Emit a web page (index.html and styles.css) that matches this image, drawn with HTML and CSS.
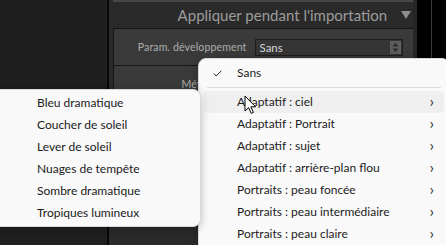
FILE: index.html
```html
<!DOCTYPE html>
<html lang="fr">
<head>
    <meta charset="UTF-8">
    <meta name="viewport" content="width=device-width, initial-scale=1.0">
    <title>Appliquer pendant l'importation</title>
    <link rel="stylesheet" href="styles.css">
</head>
<body>
    <div class="app">
        <div class="side"></div>
        <div class="split"></div>
        <div class="panel">
            <div class="panel-inner">
                <div class="panel-head">
                    <span class="panel-title">Appliquer pendant l'importation</span>
                    <span class="tri"></span>
                </div>
                <div class="box">
                    <div class="row">
                        <span class="label">Param. développement</span>
                        <div class="select">
                            <span>Sans</span>
                            <span class="stepper">
                                <svg width="7" height="11" viewBox="0 0 7 11"><path d="M3.5 1 L6.5 4.5 H0.5 Z M3.5 10 L6.5 6.5 H0.5 Z" fill="#2a2a2a"/></svg>
                            </span>
                        </div>
                    </div>
                    <div class="row">
                        <span class="label">Métadonnées</span>
                    </div>
                </div>
            </div>
        </div>
        <div class="frame"></div>
        <div class="gap"></div>
        <div class="line"></div>
        <div class="gap"></div>
    </div>

    <!-- main preset menu -->
    <div class="menu main-menu">
        <div class="item checked">
            <svg class="check" width="9" height="7" viewBox="0 0 9 7"><path d="M0.7 3.6 L3.2 6 L8.3 0.8" fill="none" stroke="#222" stroke-width="1"/></svg>
            Sans
        </div>
        <div class="sep"></div>
        <div class="item hover">Adaptatif : ciel<span class="chev">&#8250;</span></div>
        <div class="item">Adaptatif : Portrait<span class="chev">&#8250;</span></div>
        <div class="item">Adaptatif : sujet<span class="chev">&#8250;</span></div>
        <div class="item">Adaptatif : arrière-plan flou<span class="chev">&#8250;</span></div>
        <div class="item">Portraits : peau foncée<span class="chev">&#8250;</span></div>
        <div class="item">Portraits : peau intermédiaire<span class="chev">&#8250;</span></div>
        <div class="item">Portraits : peau claire<span class="chev">&#8250;</span></div>
    </div>

    <!-- submenu for Adaptatif : ciel -->
    <div class="menu sub-menu">
        <div class="item">Bleu dramatique</div>
        <div class="item">Coucher de soleil</div>
        <div class="item">Lever de soleil</div>
        <div class="item">Nuages de tempête</div>
        <div class="item">Sombre dramatique</div>
        <div class="item">Tropiques lumineux</div>
    </div>

    <svg class="cursor" width="13" height="20" viewBox="0 0 13 20">
        <path d="M1 1 V16 L4.6 12.6 L7.2 18.4 L9.4 17.4 L6.9 11.8 H11.6 Z" fill="#fff" stroke="#000" stroke-width="1" stroke-linejoin="miter"/>
    </svg>
</body>
</html>
```

FILE: styles.css
```css
body {
    margin: 0;
    width: 446px;
    height: 245px;
    overflow: hidden;
    background: #000;
    font-family: 'Open Sans', 'Noto Sans', sans-serif;
    position: relative;
}

.app {
    display: flex;
    height: 245px;
}

.side {
    width: 107px;
    background: #1f1f1f;
}

.split {
    width: 2px;
    background: #080808;
}

.panel {
    width: 306px;
    background: #2a2a2a;
    padding-left: 4px;
    box-sizing: border-box;
    font-family: 'Lato', 'Open Sans', sans-serif;
}

.panel-inner {
    border-top: 2px solid #474747;
    height: 100%;
}

.panel-head {
    height: 26px;
    display: flex;
    align-items: center;
    justify-content: flex-end;
    padding-right: 2px;
}

.panel-title {
    font-size: 15px;
    color: #9c9c9c;
    margin-right: 14px;
}

.tri {
    width: 0;
    height: 0;
    border-left: 5px solid transparent;
    border-right: 5px solid transparent;
    border-top: 8px solid #8e8e8e;
}

.box {
    border: 1px solid #151515;
    border-right: none;
    background: #3a3a3a;
}

.row {
    height: 36px;
    display: flex;
    align-items: center;
    border-bottom: 1px solid #181818;
}

.label {
    width: 133px;
    text-align: right;
    font-size: 10.6px;
    letter-spacing: 0.1px;
    color: #adadad;
    white-space: nowrap;
}

.select {
    margin-left: 8px;
    width: 148px;
    height: 17px;
    box-sizing: border-box;
    border: 1px solid #1c1c1c;
    background: #353535;
    display: flex;
    align-items: center;
    justify-content: space-between;
    padding-left: 4px;
    font-size: 11.5px;
    color: #d6d6d6;
}

.stepper {
    width: 11px;
    height: 13px;
    margin-right: 1px;
    background: #5c5c5c;
    display: flex;
    align-items: center;
    justify-content: center;
}

.frame {
    width: 4px;
    background: #262626;
}

.gap {
    width: 14px;
    background: #000;
}

.line {
    width: 1px;
    background: #3a3a3a;
}

.menu {
    position: absolute;
    background: #f9f9f9;
    border: 1px solid #d9d9d9;
    box-shadow: 0 2px 8px rgba(0, 0, 0, 0.25);
    font-family: 'Lato', 'Open Sans', sans-serif;
    font-size: 12px;
    color: #1b1b1b;
    box-sizing: border-box;
}

.main-menu {
    left: 198px;
    top: 58px;
    width: 252px;
    height: 200px;
    border-radius: 8px;
    padding-top: 3px;
}

.sub-menu {
    left: -10px;
    top: 89px;
    width: 211px;
    height: 138px;
    border-radius: 8px;
    padding-top: 2px;
    padding-left: 10px;
}

.item {
    height: 22px;
    line-height: 22px;
    padding-left: 36px;
    position: relative;
    white-space: nowrap;
}

.main-menu .item {
    margin: 0 5px;
    padding-left: 33px;
}

.item.hover {
    background: #efefef;
    border-radius: 4px;
}

.check {
    position: absolute;
    left: 9px;
    top: 8px;
}

.chev {
    position: absolute;
    right: 10px;
    top: -1px;
    font-size: 16px;
    color: #333;
}

.sep {
    height: 1px;
    margin: 3px 8px 3px 8px;
    background: #dadada;
}

.cursor {
    position: absolute;
    left: 244px;
    top: 95px;
}
```
